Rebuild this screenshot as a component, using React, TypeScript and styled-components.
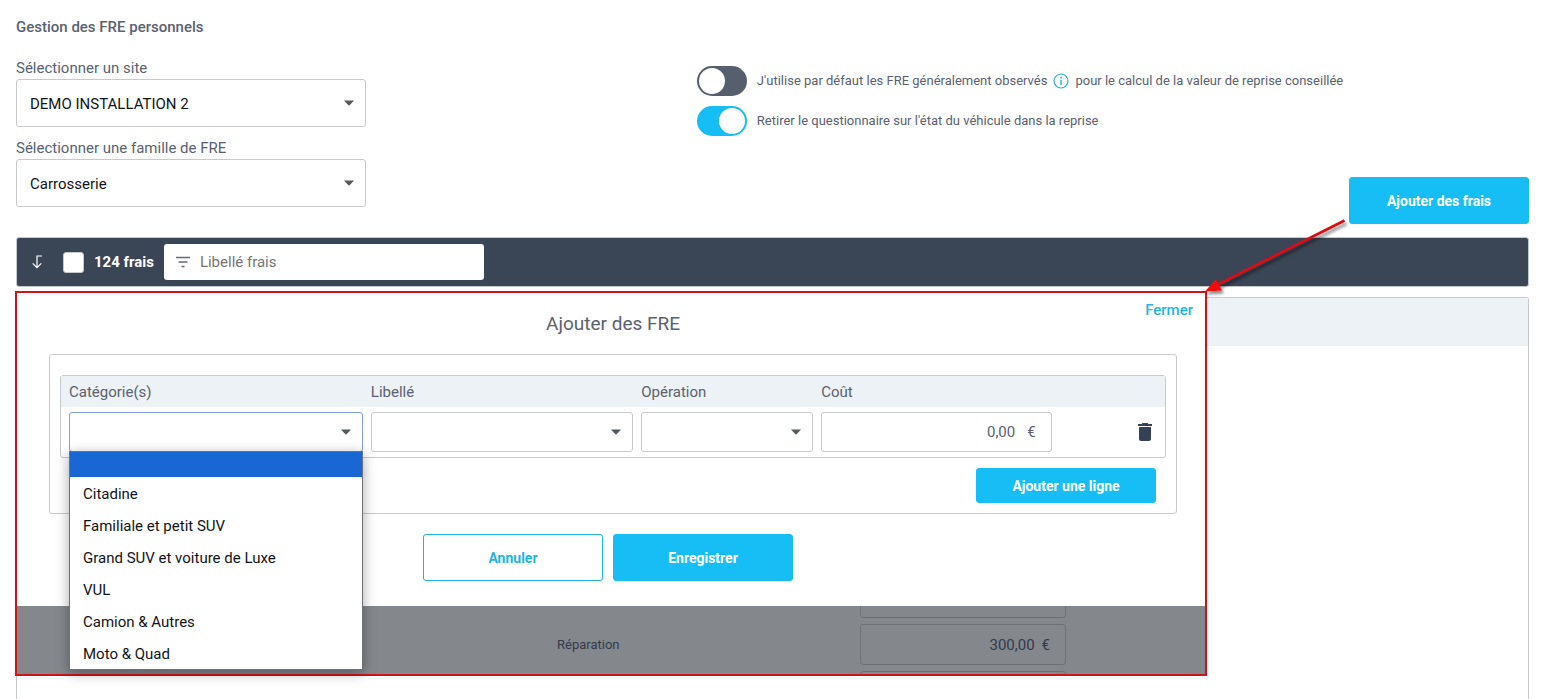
import React, { useId } from "react";
import styled, { createGlobalStyle, css } from "styled-components";

const color = {
  text: "#5a6170",
  ink: "#111418",
  navy: "#3a4556",
  blue: "#17bdf5",
  link: "#1fb4e4",
  line: "#c8c9cc",
  head: "#ecf2f5",
  red: "#d01317",
};

const GlobalStyle = createGlobalStyle`
  *, *::before, *::after { box-sizing: border-box; }
  body {
    margin: 0;
    background: #fff;
    color: ${color.text};
    font: 400 15px/22px Roboto, "Liberation Sans", sans-serif;
  }
  button, input, select { font: inherit; color: inherit; margin: 0; }
`;

const Page = styled.main`
  display: flex;
  flex-direction: column;
  min-height: 100vh;
  padding: 16px 16px 0;
`;

const PageTitle = styled.h1`
  margin: 0 0 19px;
  font-size: 15px;
  line-height: 22px;
  font-weight: 500;
`;

const Settings = styled.section`
  display: grid;
  grid-template-columns: 45% 1fr;
  align-items: start;
`;

const Filters = styled.div`
  display: grid;
  gap: 10px;
  width: 350px;
`;

const Options = styled.div`
  display: grid;
  gap: 10px;
  padding-top: 9px;
`;

const FieldLabel = styled.label`
  display: block;
  line-height: 22px;
`;

const SelectBox = styled.div`
  position: relative;
`;

const SelectControl = styled.select<{ $compact?: boolean; $open?: boolean }>`
  display: block;
  width: 100%;
  height: ${(p) => (p.$compact ? 40 : 48)}px;
  padding: 1px 32px 0 13px;
  appearance: none;
  background: #fff;
  border: 1px solid ${(p) => (p.$open ? "#7f9fd8" : color.line)};
  border-radius: 3px;
  color: ${color.ink};
  outline: none;
`;

const Caret = styled.svg`
  position: absolute;
  right: 12px;
  top: 50%;
  width: 10px;
  height: 6px;
  margin-top: -3px;
  fill: #555a61;
  pointer-events: none;
`;

const ToggleRow = styled.div`
  display: flex;
  align-items: center;
  gap: 10px;
  min-height: 30px;
  font-size: 13px;
`;

const ToggleLabel = styled.label`
  display: flex;
  align-items: center;
  gap: 6px;
`;

const Switch = styled.input`
  flex: none;
  width: 50px;
  height: 30px;
  padding: 2px;
  appearance: none;
  border-radius: 15px;
  background: #565f6e;

  &::before {
    content: "";
    display: block;
    width: 26px;
    height: 26px;
    border-radius: 50%;
    background: #fff;
  }
  &:checked {
    background: ${color.blue};
  }
  &:checked::before {
    margin-left: 20px;
  }
`;

const Button = styled.button<{ $outline?: boolean; $small?: boolean }>`
  width: 180px;
  height: ${(p) => (p.$small ? 35 : 47)}px;
  padding: 0;
  border: 1px solid ${color.blue};
  border-radius: 3px;
  background: ${color.blue};
  color: #fff;
  font-size: 14px;
  font-weight: 700;
  ${(p) =>
    p.$outline &&
    css`
      background: #fff;
      border-color: ${color.link};
      color: ${color.link};
    `}
`;

const AddRow = styled.div`
  display: flex;
  justify-content: flex-end;
  margin: -30px 0 13px;
`;

const Toolbar = styled.div`
  display: flex;
  align-items: center;
  height: 50px;
  padding: 0 15px;
  border: 1px solid #c3c9d1;
  border-radius: 3px;
  background: ${color.navy};
  color: #fff;
`;

const SortButton = styled.button`
  display: flex;
  padding: 0;
  margin-right: 20px;
  border: 0;
  background: none;
`;

const CountLabel = styled.label`
  display: flex;
  align-items: center;
  gap: 10px;
  margin-right: 10px;
  font-weight: 700;
`;

const Tick = styled.input`
  width: 21px;
  height: 21px;
  appearance: none;
  border: 1px solid #c8c9cc;
  border-radius: 3px;
  background: #fff;
`;

const SearchBox = styled.div`
  display: flex;
  align-items: center;
  gap: 9px;
  width: 320px;
  height: 36px;
  padding: 0 11px;
  border-radius: 3px;
  background: #fff;
`;

const SearchInput = styled.input`
  flex: 1;
  min-width: 0;
  padding: 0;
  border: 0;
  outline: none;
  background: none;
  color: ${color.ink};

  &::placeholder {
    color: #757575;
    opacity: 1;
  }
`;

const Stage = styled.div`
  position: relative;
  display: flex;
  flex: 1;
  min-height: 402px;
  padding-top: 10px;
`;

const List = styled.div`
  flex: 1;
  border: 1px solid ${color.line};
  border-bottom: 0;
  border-radius: 3px 3px 0 0;
`;

const ListHead = styled.div`
  height: 48px;
  background: ${color.head};
`;

const Dialog = styled.section`
  position: absolute;
  top: 4px;
  left: -1px;
  right: 322px;
  border: 2px solid ${color.red};
  background: #fff;
`;

const DialogTop = styled.div`
  display: flex;
  justify-content: flex-end;
  height: 16px;
  padding: 6px 12px 0 0;
`;

const CloseLink = styled.a`
  color: ${color.link};
  font-weight: 500;
  text-decoration: none;
`;

const DialogBody = styled.div`
  padding: 0 28px 25px 32px;
`;

const DialogTitle = styled.h2`
  margin: 0 0 15px;
  font-size: 19px;
  line-height: 30px;
  font-weight: 400;
  text-align: center;
`;

const Card = styled.div`
  padding: 20px 10px 10px;
  border: 1px solid ${color.line};
  border-radius: 3px;
`;

const TableFrame = styled.div`
  border: 1px solid ${color.line};
  border-radius: 3px;
`;

const FeeTable = styled.table`
  width: 100%;
  table-layout: fixed;
  border-collapse: collapse;
`;

const Column = styled.col<{ $share: number }>`
  width: ${(p) => p.$share}%;
`;

const HeadCell = styled.th`
  height: 31px;
  padding: 0 4px;
  background: ${color.head};
  font-weight: 400;
  text-align: left;

  &:first-child {
    padding-left: 8px;
  }
`;

const Cell = styled.td`
  padding: 5px 4px;

  &:first-child {
    padding-left: 8px;
  }
  &:last-child {
    padding-right: 8px;
  }
`;

const Money = styled.div<{ $dim?: boolean }>`
  display: flex;
  align-items: center;
  gap: ${(p) => (p.$dim ? 7 : 12)}px;
  height: ${(p) => (p.$dim ? 41 : 40)}px;
  padding: 0 15px;
  border: 1px solid ${(p) => (p.$dim ? "#6e7176" : color.line)};
  border-radius: 3px;
`;

const MoneyInput = styled.input`
  flex: 1;
  min-width: 0;
  padding: 0;
  border: 0;
  outline: none;
  background: none;
  text-align: right;
`;

const TrashButton = styled.button`
  display: flex;
  margin-left: auto;
  padding: 0;
  border: 0;
  background: none;
  color: #344055;
`;

const Menu = styled.ul`
  position: absolute;
  z-index: 2;
  top: 39px;
  left: 0;
  width: 100%;
  margin: 0;
  padding: 0;
  list-style: none;
  border: 1px solid #6f7276;
  background: #fff;
  box-shadow: 0 3px 12px rgba(0, 0, 0, 0.35);
  color: ${color.ink};
`;

const MenuItem = styled.li<{ $active?: boolean }>`
  height: ${(p) => (p.$active ? 25 : 32)}px;
  padding: 1px 13px 0;
  line-height: 32px;
  white-space: nowrap;
  background: ${(p) => (p.$active ? "#1967d2" : "#fff")};
`;

const LineActions = styled.div`
  display: flex;
  justify-content: flex-end;
  padding: 10px 10px 0 0;
`;

const DialogActions = styled.div`
  display: flex;
  justify-content: center;
  gap: 10px;
  padding: 20px 10px 0 0;
`;

const Dimmed = styled.div`
  display: flex;
  flex-direction: column;
  justify-content: center;
  gap: 6px;
  height: 68px;
  padding-top: 9px;
  overflow: hidden;
  background: #84888d;
  color: #333a48;
`;

const DimmedRow = styled.div`
  display: grid;
  flex: none;
  grid-template-columns:
    minmax(0, 540fr) minmax(0, 303fr) minmax(0, 206fr)
    minmax(0, 139fr);
  align-items: center;
`;

const Operation = styled.span`
  grid-column: 2;
  font-size: 13px;
`;

const DimmedCost = styled.div`
  grid-column: 3;
`;

const Arrow = styled.svg`
  position: absolute;
  z-index: 3;
  top: -74px;
  right: 176px;
  width: 152px;
  height: 84px;
  pointer-events: none;
`;

type SelectProps = {
  label: string;
  value?: string;
  showLabel?: boolean;
  compact?: boolean;
  open?: boolean;
  children?: React.ReactNode;
};

function Select({ label, value = "", showLabel, compact, open, children }: SelectProps) {
  const id = useId();
  return (
    <div>
      {showLabel && <FieldLabel htmlFor={id}>{label}</FieldLabel>}
      <SelectBox>
        <SelectControl
          id={id}
          aria-label={showLabel ? undefined : label}
          $compact={compact}
          $open={open}
          defaultValue={value}
        >
          <option value={value}>{value}</option>
        </SelectControl>
        <Caret viewBox="0 0 10 6" aria-hidden="true">
          <path d="M0 .5h10L5.6 5.2q-.6.6-1.2 0z" />
        </Caret>
        {children}
      </SelectBox>
    </div>
  );
}

const categories = [
  "Citadine",
  "Familiale et petit SUV",
  "Grand SUV et voiture de Luxe",
  "VUL",
  "Camion & Autres",
  "Moto & Quad",
];

const dimmedRows = [
  { operation: "", cost: "" },
  { operation: "Réparation", cost: "300,00" },
  { operation: "", cost: "" },
];

export default function App() {
  return (
    <>
      <GlobalStyle />
      <Page>
        <PageTitle>Gestion des FRE personnels</PageTitle>
        <Settings>
          <Filters>
            <Select showLabel label="Sélectionner un site" value="DEMO INSTALLATION 2" />
            <Select showLabel label="Sélectionner une famille de FRE" value="Carrosserie" />
          </Filters>
          <Options>
            <ToggleRow>
              <Switch type="checkbox" role="switch" id="observed" />
              <ToggleLabel htmlFor="observed">
                <span>J'utilise par défaut les FRE généralement observés</span>
                <svg width="16" height="16" viewBox="0 0 16 16" fill="none" stroke="#2bb1d8" aria-hidden="true">
                  <circle cx="8" cy="8" r="7" strokeWidth="1.2" />
                  <path d="M8 6.7V12M8 4v1.5" strokeWidth="1.5" />
                </svg>
                <span>pour le calcul de la valeur de reprise conseillée</span>
              </ToggleLabel>
            </ToggleRow>
            <ToggleRow>
              <Switch type="checkbox" role="switch" id="survey" defaultChecked />
              <ToggleLabel htmlFor="survey">
                Retirer le questionnaire sur l'état du véhicule dans la reprise
              </ToggleLabel>
            </ToggleRow>
          </Options>
        </Settings>
        <AddRow>
          <Button type="button">Ajouter des frais</Button>
        </AddRow>
        <Toolbar>
          <SortButton type="button" aria-label="Trier">
            <svg width="11" height="14" viewBox="0 0 11 14" fill="none" stroke="#fff" strokeWidth="1.2">
              <path d="M10 1H5V12.500M.7 8.300L5 12.700L9.300 8.300" />
            </svg>
          </SortButton>
          <CountLabel>
            <Tick type="checkbox" />
            124 frais
          </CountLabel>
          <SearchBox>
            <svg width="16" height="12" viewBox="0 0 16 12" stroke="#666b73" strokeWidth="1.5" aria-hidden="true">
              <path d="M1 1.5h14M3.5 6h9M6.5 10.5h3" />
            </svg>
            <SearchInput type="text" aria-label="Libellé frais" placeholder="Libellé frais" />
          </SearchBox>
        </Toolbar>
        <Stage>
          <List>
            <ListHead />
          </List>
          <Dialog role="dialog" aria-labelledby="dialog-title">
            <DialogTop>
              <CloseLink href="#">Fermer</CloseLink>
            </DialogTop>
            <DialogBody>
              <DialogTitle id="dialog-title">Ajouter des FRE</DialogTitle>
              <Card>
                <TableFrame>
                  <FeeTable>
                    <colgroup>
                      <Column $share={27.7} />
                      <Column $share={24.5} />
                      <Column $share={16.3} />
                      <Column $share={21.6} />
                      <col />
                    </colgroup>
                    <thead>
                      <tr>
                        <HeadCell scope="col">Catégorie(s)</HeadCell>
                        <HeadCell scope="col">Libellé</HeadCell>
                        <HeadCell scope="col">Opération</HeadCell>
                        <HeadCell scope="col">Coût</HeadCell>
                        <HeadCell as="td" />
                      </tr>
                    </thead>
                    <tbody>
                      <tr>
                        <Cell>
                          <Select compact open label="Catégorie(s)">
                            <Menu role="listbox" aria-label="Catégorie(s)">
                              <MenuItem $active role="option" aria-selected="true" />
                              {categories.map((name) => (
                                <MenuItem key={name} role="option" aria-selected="false">
                                  {name}
                                </MenuItem>
                              ))}
                            </Menu>
                          </Select>
                        </Cell>
                        <Cell>
                          <Select compact label="Libellé" />
                        </Cell>
                        <Cell>
                          <Select compact label="Opération" />
                        </Cell>
                        <Cell>
                          <Money>
                            <MoneyInput type="text" aria-label="Coût" defaultValue="0,00" />
                            <span>€</span>
                          </Money>
                        </Cell>
                        <Cell>
                          <TrashButton type="button" aria-label="Supprimer la ligne">
                            <svg width="24" height="24" viewBox="0 0 24 24" fill="currentColor">
                              <path d="M6 19c0 1.1.9 2 2 2h8c1.1 0 2-.9 2-2V7H6v12zM19 4h-3.5l-1-1h-5l-1 1H5v2h14V4z" />
                            </svg>
                          </TrashButton>
                        </Cell>
                      </tr>
                    </tbody>
                  </FeeTable>
                </TableFrame>
                <LineActions>
                  <Button type="button" $small>
                    Ajouter une ligne
                  </Button>
                </LineActions>
              </Card>
              <DialogActions>
                <Button type="button" $outline>
                  Annuler
                </Button>
                <Button type="button">Enregistrer</Button>
              </DialogActions>
            </DialogBody>
            <Dimmed>
              {dimmedRows.map((row, i) => (
                <DimmedRow key={i}>
                  <Operation>{row.operation}</Operation>
                  <DimmedCost>
                    <Money $dim>
                      <MoneyInput type="text" aria-label="Coût de la réparation" defaultValue={row.cost} />
                      {row.cost && <span>€</span>}
                    </Money>
                  </DimmedCost>
                </DimmedRow>
              ))}
            </Dimmed>
          </Dialog>
          <Arrow viewBox="0 0 152 84" aria-hidden="true">
            <defs>
              <filter id="arrow-shadow" x="-10%" y="-10%" width="130%" height="130%">
                <feDropShadow dx="2" dy="3" stdDeviation="1.5" floodColor="#000" floodOpacity="0.45" />
              </filter>
            </defs>
            <g filter="url(#arrow-shadow)">
              <path d="M143.500 7.500L14 73" stroke="#d90f12" strokeWidth="2.8" />
              <path d="M4 78.500L15 66L21 77.500z" fill="#f20d0d" />
            </g>
          </Arrow>
        </Stage>
      </Page>
    </>
  );
}
